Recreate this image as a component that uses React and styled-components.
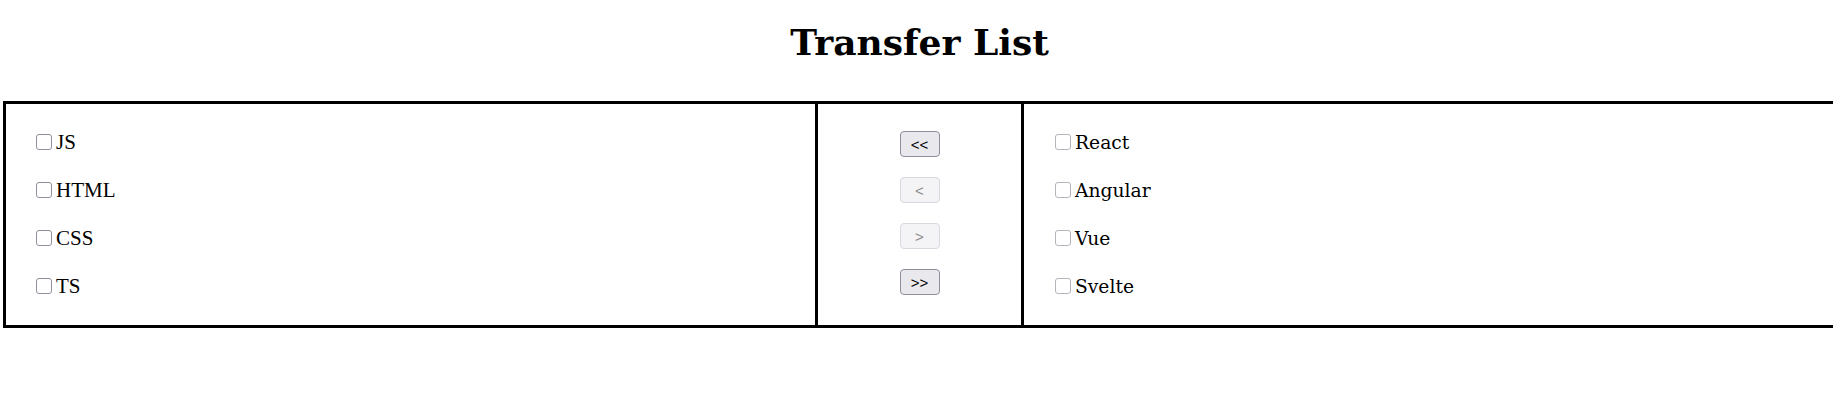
import React, { useState } from 'react';
import styled, { createGlobalStyle } from 'styled-components';

const GlobalStyle = createGlobalStyle`
  html, body {
    margin: 0;
    padding: 0;
    background: #fff;
    overflow: hidden;
  }
`;

const Page = styled.div`
  padding: 0 0 0 3px;
  width: 1840px;
`;

const Title = styled.h1`
  margin: 0;
  padding: 24px 0 41px;
  width: 1833px;
  text-align: center;
  font-family: "DejaVu Serif", serif;
  font-weight: bold;
  font-size: 36px;
  line-height: 36px;
  color: #000;
`;

const Board = styled.div`
  display: grid;
  grid-template-columns: 809px 206px 809px;
  border: 3px solid #000;
`;

const Column = styled.div`
  display: flex;
  flex-direction: column;
  gap: ${(p) => p.$gap}px;
  padding: ${(p) => p.$pad};
  align-items: ${(p) => (p.$center ? 'center' : 'flex-start')};
  border-left: ${(p) => (p.$divider ? '3px solid #000' : 'none')};
`;

const Item = styled.label`
  display: flex;
  align-items: center;
  height: 16px;
  gap: 4px;
  font-family: ${(p) => p.$font};
  font-size: ${(p) => p.$size}px;
  color: #000;
`;

const Check = styled.input.attrs({ type: 'checkbox' })`
  appearance: none;
  margin: 0;
  width: 16px;
  height: 16px;
  border: 1px solid ${(p) => p.$tone};
  border-radius: 3px;
  background: #fff;
  box-sizing: border-box;
  flex: none;
  &:checked {
    background: #0060df;
    border-color: #0060df;
  }
`;

const MoveButton = styled.button`
  width: 40px;
  height: 26px;
  padding: 0;
  box-sizing: border-box;
  border: 1px solid #8f8f9d;
  border-radius: 4px;
  background: #e9e9ed;
  color: #000;
  font-family: "Liberation Sans", sans-serif;
  font-size: 15px;
  line-height: 1;

  &:disabled {
    background: #f4f4f6;
    border-color: #d8d8de;
    color: #8a8a8a;
  }
`;

export default function App() {
  const [left, setLeft] = useState(['JS', 'HTML', 'CSS', 'TS']);
  const [right, setRight] = useState(['React', 'Angular', 'Vue', 'Svelte']);
  const [picked, setPicked] = useState({});

  const toggle = (name) => setPicked((s) => ({ ...s, [name]: !s[name] }));
  const anyLeft = left.some((n) => picked[n]);
  const anyRight = right.some((n) => picked[n]);

  const moveAll = (from, to, setFrom, setTo) => {
    setTo([...to, ...from]);
    setFrom([]);
  };
  const moveSome = (from, to, setFrom, setTo) => {
    setTo([...to, ...from.filter((n) => picked[n])]);
    setFrom(from.filter((n) => !picked[n]));
    setPicked({});
  };

  return (
    <Page>
      <GlobalStyle />
      <Title>Transfer List</Title>
      <Board>
        <Column $gap={32} $pad="30px 30px 31px">
          {left.map((n) => (
            <Item key={n} $font={'"Liberation Serif", serif'} $size={21}>
              <Check $tone="#8f8f9d" checked={!!picked[n]} onChange={() => toggle(n)} />
              {n}
            </Item>
          ))}
        </Column>
        <Column $divider $center $gap={20} $pad="27px 0 28px">
          <MoveButton disabled={!right.length} onClick={() => moveAll(right, left, setRight, setLeft)}>&lt;&lt;</MoveButton>
          <MoveButton disabled={!anyRight} onClick={() => moveSome(right, left, setRight, setLeft)}>&lt;</MoveButton>
          <MoveButton disabled={!anyLeft} onClick={() => moveSome(left, right, setLeft, setRight)}>&gt;</MoveButton>
          <MoveButton disabled={!left.length} onClick={() => moveAll(left, right, setLeft, setRight)}>&gt;&gt;</MoveButton>
        </Column>
        <Column $divider $gap={32} $pad="30px 31px 31px">
          {right.map((n) => (
            <Item key={n} $font={'"DejaVu Serif", serif'} $size={18.7}>
              <Check $tone="#b4b4bc" checked={!!picked[n]} onChange={() => toggle(n)} />
              {n}
            </Item>
          ))}
        </Column>
      </Board>
    </Page>
  );
}
